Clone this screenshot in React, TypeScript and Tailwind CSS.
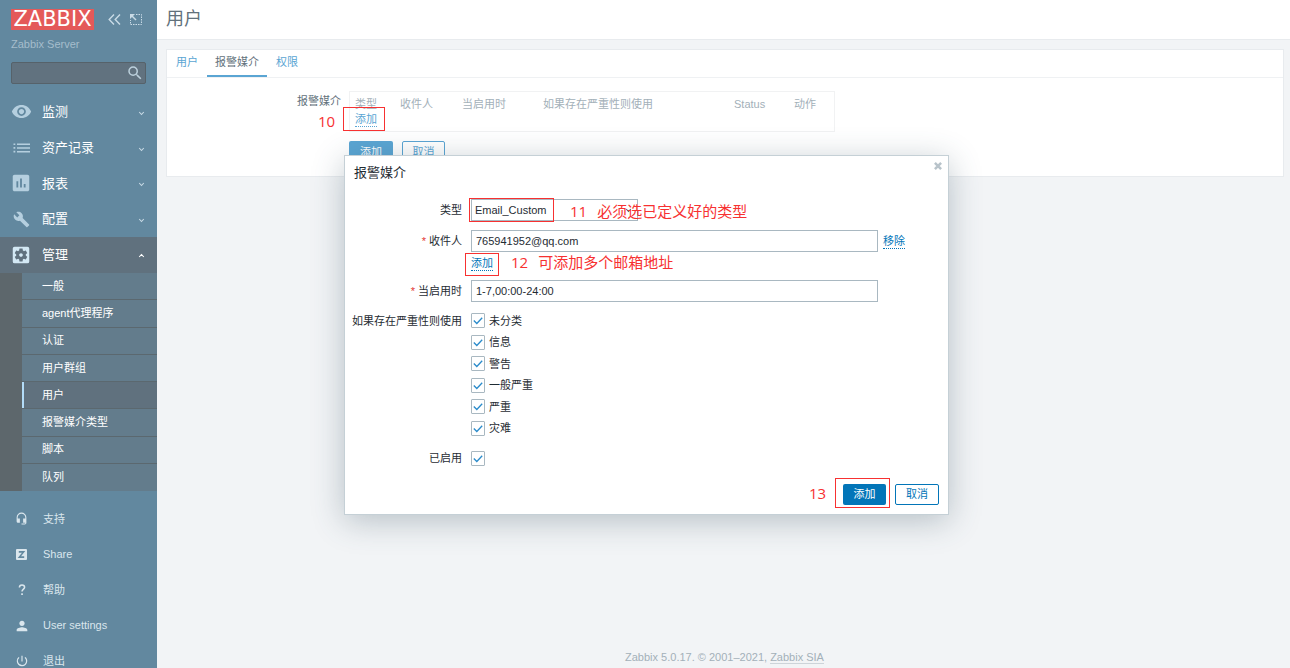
import React, { useState } from "react";
import {
  MdAssessment,
  MdBuild,
  MdHeadsetMic,
  MdPerson,
  MdPowerSettingsNew,
  MdSearch,
  MdSettingsApplications,
  MdVisibility,
} from "react-icons/md";

function ListIcon() {
  return (
    <svg viewBox="0 0 17 10" className="w-[17px] h-[10px]" fill="currentColor">
      <path d="M4 .5H17V2H4ZM4 4.200H17V5.700H4ZM4 7.900H17V9.400H4Z" />
      <path d="M.5 .4H2.300V2H.5ZM.5 4.100H2.300V5.700H.5ZM.5 7.800H2.300V9.400H.5Z" />
    </svg>
  );
}

function ShareIcon() {
  return (
    <svg viewBox="0 0 11 11" className="w-[11px] h-[11px]">
      <rect width="11" height="11" rx="1" fill="currentColor" />
      <path d="M2.800 2.900H7.600L3.400 8.100H8.200" fill="none" stroke="#62889f" strokeWidth="1.600" />
    </svg>
  );
}

function HelpIcon() {
  return (
    <svg viewBox="0 0 8 12" className="w-2 h-3">
      <path
        d="M1.4 3.6C1.4 2 2.5 1 4 1s2.6.9 2.6 2.3C6.6 5 4 5.300 4 7.600"
        fill="none"
        stroke="currentColor"
        strokeWidth="1.500"
      />
      <rect x="3.200" y="9.300" width="1.700" height="1.700" fill="currentColor" />
    </svg>
  );
}

const mainMenu = [
  { label: "监测", icon: <MdVisibility size={21} /> },
  { label: "资产记录", icon: <ListIcon /> },
  { label: "报表", icon: <MdAssessment size={22} /> },
  { label: "配置", icon: <MdBuild size={17} /> },
];

const adminMenu = ["一般", "agent代理程序", "认证", "用户群组", "用户", "报警媒介类型", "脚本", "队列"];

const userMenu = [
  { label: "支持", icon: <MdHeadsetMic size={13} /> },
  { label: "Share", icon: <ShareIcon /> },
  { label: "帮助", icon: <HelpIcon /> },
  { label: "User settings", icon: <MdPerson size={16} /> },
  { label: "退出", icon: <MdPowerSettingsNew size={14} /> },
];

const severities = ["未分类", "信息", "警告", "一般严重", "严重", "灾难"];

function Chevron({ up = false }: { up?: boolean }) {
  return (
    <svg viewBox="0 0 7 5" className="w-[7px] h-[5px]" fill="none" stroke="currentColor" strokeWidth="1.1">
      <path d={up ? "M1.200 4L3.500 1.500L5.800 4" : "M1.200 1L3.500 3.500L5.800 1"} />
    </svg>
  );
}

function Sidebar() {
  return (
    <aside className="w-[157px] shrink-0 bg-[#62889f] text-white">
      <div className="px-[11px] pt-[9px] h-[94px]">
        <div className="flex items-center">
          <a
            href="#"
            className="w-[83px] h-[21px] bg-[#e45959] flex items-center justify-center font-['DejaVu_Sans'] text-[21px] leading-[21px]"
          >
            ZABBIX
          </a>
          <button aria-label="收起" className="ml-[14px] text-[#c9dbe6]">
            <svg viewBox="0 0 13 11" className="w-[13px] h-[11px]" fill="none" stroke="currentColor" strokeWidth="1.4">
              <path d="M6 .6L1.200 5.500L6 10.400M12 .6L7.200 5.500L12 10.400" />
            </svg>
          </button>
          <button aria-label="隐藏" className="ml-[9px] text-[#c9dbe6]">
            <svg viewBox="0 0 12 11" className="w-3 h-[11px]" fill="none" stroke="currentColor">
              <path d="M6 .5H11.500V10.500H.5V6" strokeDasharray="1.500 1" />
              <path d="M1.500 1.500L6 6" strokeWidth="1.400" />
              <path d="M0 0H5L0 5Z" fill="currentColor" stroke="none" />
            </svg>
          </button>
        </div>
        <div className="mt-[7px] h-[14px] text-[11px] leading-[14px] text-[#a5bdcc]">Zabbix Server</div>
        <div className="relative mt-[11px]">
          <input
            aria-label="搜索"
            className="block w-full h-[22px] px-1 bg-[#61727f] border border-[#56626a] rounded-[2px]"
          />
          <button aria-label="搜索" className="absolute right-[2px] top-[2px] text-[#bcd0dc]">
            <MdSearch size={18} />
          </button>
        </div>
      </div>

      <nav>
        <ul className="grid grid-rows-4 h-[143px]">
          {mainMenu.map(({ label, icon }) => (
            <li key={label}>
              <a href="#" className="flex items-center h-full pr-3 text-[13px]">
                <span className="w-[42px] flex justify-center text-[#b5cfdf]">{icon}</span>
                <span className="flex-1">{label}</span>
                <span className="pt-[3px] text-[#c9dbe6]">
                  <Chevron />
                </span>
              </a>
            </li>
          ))}
        </ul>
        <a href="#" className="flex items-center h-9 pr-3 text-[13px] bg-[#60717e]">
          <span className="w-[42px] flex justify-center text-[#d3e8f4]">
            <MdSettingsApplications size={22} />
          </span>
          <span className="flex-1">管理</span>
          <Chevron up />
        </a>
        <ul className="grid grid-rows-8 h-[218px] pl-[22px] bg-[#5d676c]">
          {adminMenu.map((label) => (
            <li key={label} className="border-b border-[#5b686f] last:border-b-0">
              <a
                href="#"
                className={
                  label === "用户"
                    ? "flex items-center h-full pl-[18px] text-[11px] bg-[#60717e] border-l-2 border-[#b3dcf8]"
                    : "flex items-center h-full pl-5 text-[11px] bg-[#637c8c]"
                }
              >
                {label}
              </a>
            </li>
          ))}
        </ul>
      </nav>

      <ul className="grid grid-rows-5 h-[178px] mt-[10px] text-[#dae6ed]">
        {userMenu.map(({ label, icon }) => (
          <li key={label}>
            <a href="#" className="flex items-center h-full text-[11px]">
              <span className="w-[43px] flex justify-center">{icon}</span>
              {label}
            </a>
          </li>
        ))}
      </ul>
    </aside>
  );
}

function UserForm() {
  return (
    <section className="mt-[9px] ml-[9px] mr-[6px] bg-white border border-[#e8ebee]">
      <div className="flex gap-px h-7 pl-px border-b border-[#eff1f3] text-[#5aa5d3]">
        <a href="#" className="px-2 leading-6">
          用户
        </a>
        <a href="#" className="px-2 leading-6 text-[#62717b] border-b-2 border-[#5aa5d3]">
          报警媒介
        </a>
        <a href="#" className="px-2 leading-6">
          权限
        </a>
      </div>

      <div className="grid grid-cols-[174px_1fr] gap-x-2 pt-[13px] pb-[13px]">
        <div className="pt-[2px] text-right leading-4 text-[#62717b]">报警媒介</div>
        <div>
          <div className="w-[486px] h-[41px] border border-[#f1f2f3] pt-1">
            <table className="table-fixed w-full text-left leading-4 text-[#a3b0b9]">
              <thead>
                <tr>
                  <th className="w-[45px] pl-[5px] font-normal">类型</th>
                  <th className="w-[62px] pl-[5px] font-normal">收件人</th>
                  <th className="w-[81px] pl-[5px] font-normal">当启用时</th>
                  <th className="w-[191px] pl-[5px] font-normal">如果存在严重性则使用</th>
                  <th className="w-[60px] pl-[5px] font-normal">Status</th>
                  <th className="pl-[5px] font-normal">动作</th>
                </tr>
              </thead>
              <tbody>
                <tr>
                  <td colSpan={6} className="pl-[5px] leading-[14px]">
                    <button className="text-[#5aa5d3] border-b border-dotted border-[#5aa5d3]">添加</button>
                  </td>
                </tr>
              </tbody>
            </table>
          </div>
          <div className="flex gap-[9px] mt-[9px]">
            <button className="w-11 h-[22px] rounded-[2px] bg-[#5aa5d3] text-white">添加</button>
            <button className="w-[43px] h-[22px] rounded-[2px] border border-[#5aa5d3] text-[#5aa5d3]">取消</button>
          </div>
        </div>
      </div>
    </section>
  );
}

function Checkbox({ id }: { id: string }) {
  const [checked, setChecked] = useState(true);

  return (
    <span className="relative block w-[14px] h-[15px]">
      <input
        id={id}
        type="checkbox"
        checked={checked}
        onChange={() => setChecked(!checked)}
        className="block appearance-none w-full h-full bg-white border border-[#a9b8c1] rounded-[1px]"
      />
      {checked && (
        <svg viewBox="0 0 14 15" className="absolute inset-0 pointer-events-none" fill="none" stroke="#2a8bcb">
          <path d="M2.800 7.500L5.800 10.500L11.200 4.800" strokeWidth="1.300" />
        </svg>
      )}
    </span>
  );
}

function MediaDialog() {
  const [address, setAddress] = useState("765941952@qq.com");
  const [period, setPeriod] = useState("1-7,00:00-24:00");

  const field = "block w-[407px] h-[22px] px-1 bg-white border border-[#a9b8c1]";
  const link = "leading-[14px] text-[#0275b8] border-b border-dotted border-[#0275b8]";

  return (
    <div
      role="dialog"
      aria-label="报警媒介"
      className="absolute left-[344px] top-[155px] w-[605px] bg-white border border-[#c5d0d6] shadow-[0_6px_30px_rgba(60,85,100,0.32)] pb-[9px]"
    >
      <div className="flex items-start h-[43px] pl-[9px] pr-[6px]">
        <h4 className="flex-1 pt-[9px] text-[13px] leading-4 text-[#1f2c33]">报警媒介</h4>
        <button aria-label="关闭" className="mt-[6px] text-[#b8c3ca]">
          <svg viewBox="0 0 8 8" className="w-2 h-2" stroke="currentColor" strokeWidth="2.500">
            <path d="M.9 .9L7.100 7.100M7.100 .9L.9 7.100" />
          </svg>
        </button>
      </div>

      <div className="grid grid-cols-[117px_1fr] gap-x-[9px] text-[#1f2c33]">
        <label htmlFor="type" className="text-right leading-[22px]">
          类型
        </label>
        <div className="relative w-[167px]">
          <select id="type" className="block appearance-none w-full h-[22px] pl-[3px] bg-white border border-[#a9b8c1]">
            <option>Email_Custom</option>
          </select>
          <span className="absolute right-[6px] top-[9px] flex text-[#4f5f69] pointer-events-none">
            <Chevron />
          </span>
        </div>

        <label htmlFor="sendto" className="mt-[9px] text-right leading-[22px]">
          <span className="text-[#e33734]">* </span>收件人
        </label>
        <div className="mt-[9px]">
          <div className="flex items-center gap-[5px]">
            <input id="sendto" value={address} onChange={(e) => setAddress(e.target.value)} className={field} />
            <button className={link}>移除</button>
          </div>
          <button className={"block mt-1 " + link}>添加</button>
        </div>

        <label htmlFor="period" className="mt-[9px] text-right leading-[22px]">
          <span className="text-[#e33734]">* </span>当启用时
        </label>
        <input
          id="period"
          value={period}
          onChange={(e) => setPeriod(e.target.value)}
          className={"mt-[9px] " + field}
        />

        <div className="mt-2 text-right leading-[22px]">如果存在严重性则使用</div>
        <ul className="mt-2 grid grid-rows-6 h-[129px]">
          {severities.map((name, i) => (
            <li key={name} className="flex items-center gap-1">
              <Checkbox id={"severity_" + i} />
              <label htmlFor={"severity_" + i}>{name}</label>
            </li>
          ))}
        </ul>

        <label htmlFor="active" className="mt-[9px] text-right leading-[21px]">
          已启用
        </label>
        <div className="mt-[9px] h-[21px] flex items-center">
          <Checkbox id="active" />
        </div>
      </div>

      <div className="flex justify-end gap-[9px] mt-[15px] pr-[9px]">
        <button className="w-[43px] h-[21px] rounded-[2px] bg-[#0275b8] text-white">添加</button>
        <button className="w-11 h-[21px] rounded-[2px] border border-[#0275b8] text-[#0275b8]">取消</button>
      </div>
    </div>
  );
}

// Numbered step marks drawn over the page
function Steps() {
  const box = "absolute border border-[#f73131]";
  const note = "absolute flex gap-[10px] whitespace-nowrap";

  return (
    <div className="absolute inset-0 pointer-events-none text-[15px] leading-5 text-[#f73131] font-['Open_Sans','Noto_Sans_CJK_SC',sans-serif]">
      <div className={box + " left-[343px] top-[107px] w-[42px] h-[24px]"} />
      <div className={note + " left-[318px] top-[111px]"}>10</div>

      <div className={box + " left-[469px] top-[198px] w-[85px] h-[24px]"} />
      <div className={note + " left-[570px] top-[201px]"}>
        <span>11</span>
        <span>必须选已定义好的类型</span>
      </div>

      <div className={box + " left-[465px] top-[253px] w-[34px] h-[23px]"} />
      <div className={note + " left-[511px] top-[252px]"}>
        <span>12</span>
        <span>可添加多个邮箱地址</span>
      </div>

      <div className={box + " left-[835px] top-[478px] w-[55px] h-[30px]"} />
      <div className={note + " left-[809px] top-[483px]"}>13</div>
    </div>
  );
}

function App() {
  return (
    <div className="relative flex h-screen overflow-hidden bg-[#f2f4f6] text-[11px] font-['Liberation_Sans','Noto_Sans_CJK_SC',sans-serif]">
      <Sidebar />
      <main className="flex-1 flex flex-col">
        <header className="h-10 pl-[9px] bg-white border-b border-[#e8ebee]">
          <h1 className="text-[18px] leading-[38px] text-[#62717b]">用户</h1>
        </header>
        <UserForm />
        <footer className="mt-auto pb-1 pl-[2px] text-center leading-[14px] text-[#a3b0b9]">
          Zabbix 5.0.17. © 2001–2021,{" "}
          <a href="#" className="border-b border-[#cdd4d9]">
            Zabbix SIA
          </a>
        </footer>
      </main>
      <MediaDialog />
      <Steps />
    </div>
  );
}

export default App;
